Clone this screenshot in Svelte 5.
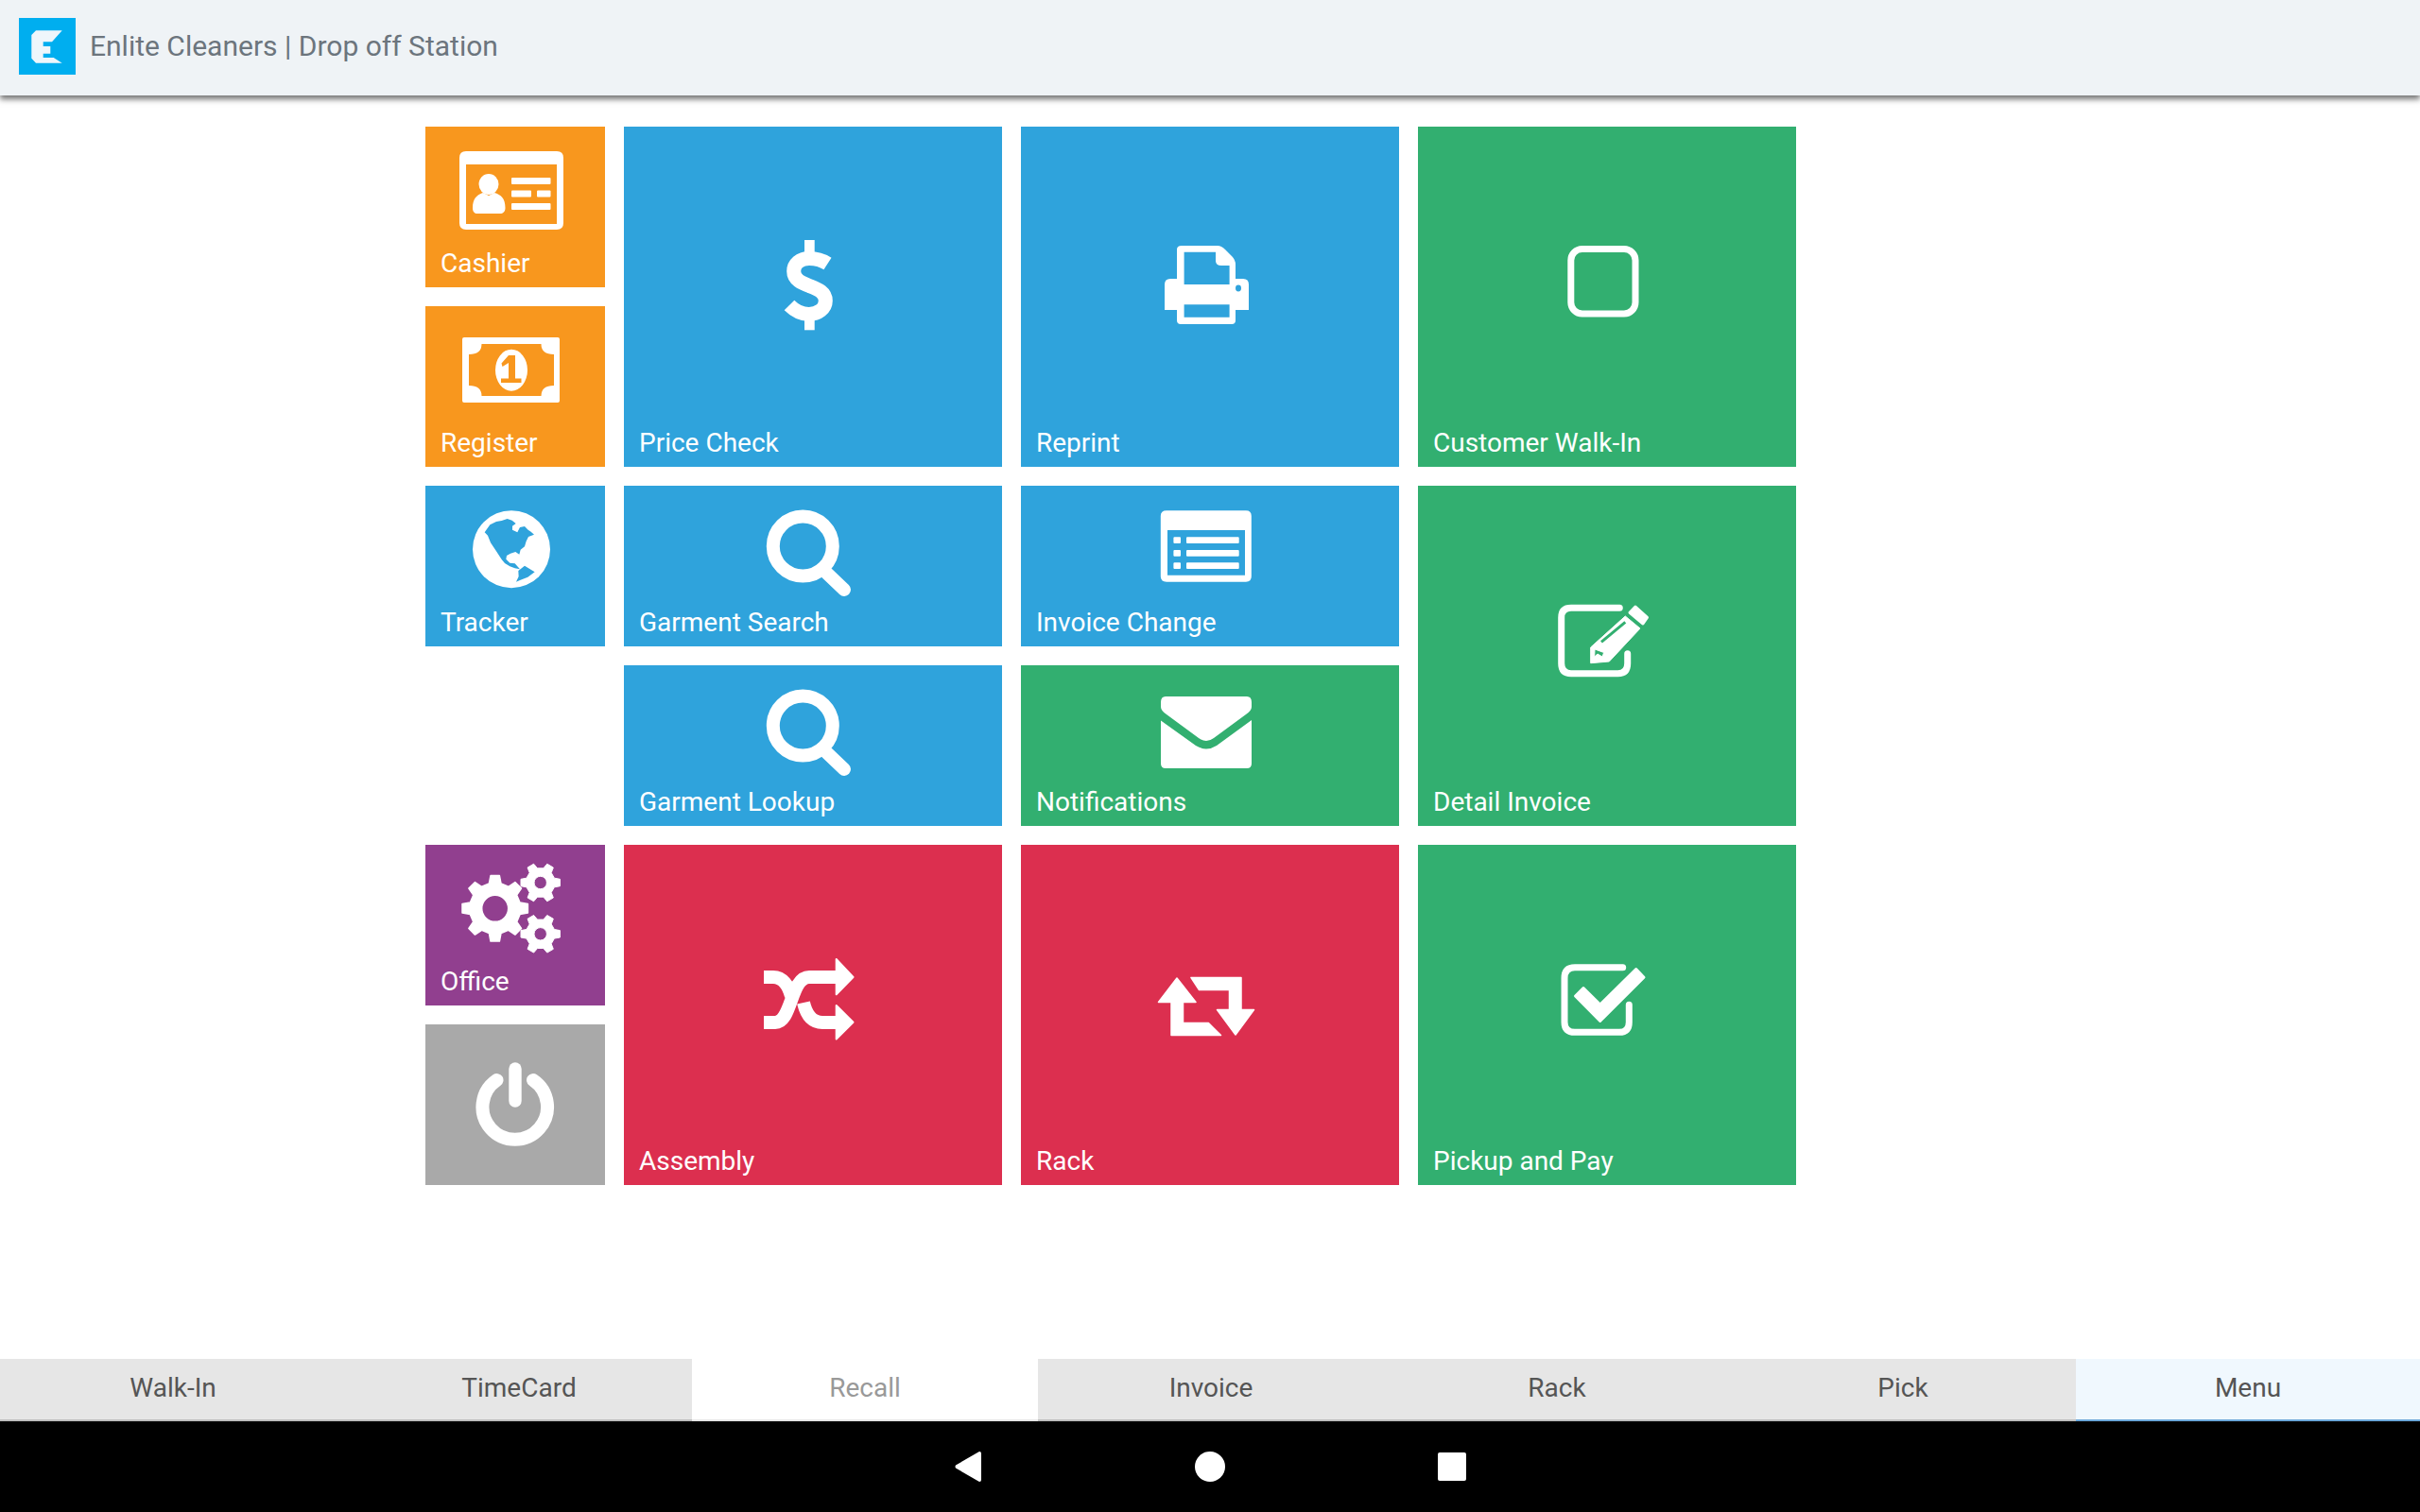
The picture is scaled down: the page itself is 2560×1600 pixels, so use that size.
<script>
  const tiles = [
    { label: 'Cashier', icon: 'cashier', color: 'orange', col: 1, row: 1 },
    { label: 'Register', icon: 'register', color: 'orange', col: 1, row: 2 },
    { label: 'Tracker', icon: 'globe', color: 'blue', col: 1, row: 3 },
    { label: 'Office', icon: 'gears', color: 'purple', col: 1, row: 5 },
    { label: '', icon: 'power', color: 'grey', col: 1, row: 6 },
    { label: 'Price Check', icon: 'dollar', color: 'blue', col: 2, row: 1, big: true },
    { label: 'Garment Search', icon: 'search', color: 'blue', col: 2, row: 3 },
    { label: 'Garment Lookup', icon: 'search', color: 'blue', col: 2, row: 4 },
    { label: 'Assembly', icon: 'shuffle', color: 'red', col: 2, row: 5, big: true },
    { label: 'Reprint', icon: 'printer', color: 'blue', col: 3, row: 1, big: true },
    { label: 'Invoice Change', icon: 'list', color: 'blue', col: 3, row: 3 },
    { label: 'Notifications', icon: 'mail', color: 'green', col: 3, row: 4 },
    { label: 'Rack', icon: 'retweet', color: 'red', col: 3, row: 5, big: true },
    { label: 'Customer Walk-In', icon: 'square', color: 'green', col: 4, row: 1, big: true },
    { label: 'Detail Invoice', icon: 'edit', color: 'green', col: 4, row: 3, big: true },
    { label: 'Pickup and Pay', icon: 'check', color: 'green', col: 4, row: 5, big: true }
  ];

  const tabs = [
    { label: 'Walk-In' },
    { label: 'TimeCard' },
    { label: 'Recall', state: 'disabled' },
    { label: 'Invoice' },
    { label: 'Rack' },
    { label: 'Pick' },
    { label: 'Menu', state: 'active' }
  ];

  // cog outline with a round hole, teeth start on the x axis
  function gear(cx, cy, outer, inner, hole, teeth) {
    const step = (Math.PI * 2) / teeth;
    const pt = (r, a) => `${(cx + r * Math.cos(a)).toFixed(1)} ${(cy + r * Math.sin(a)).toFixed(1)}`;
    let d = '';
    for (let i = 0; i < teeth; i++) {
      const a = i * step;
      d += `${i ? 'L' : 'M'}${pt(inner, a - step * 0.3)} L${pt(outer, a - step * 0.17)} L${pt(outer, a + step * 0.17)} L${pt(inner, a + step * 0.3)} `;
    }
    d += `Z M${cx - hole} ${cy} a${hole} ${hole} 0 1 0 ${hole * 2} 0 a${hole} ${hole} 0 1 0 ${-hole * 2} 0Z`;
    return d;
  }
</script>

<div class="screen">
  <header class="topbar">
    <svg class="logo" viewBox="0 0 60 60">
      <rect width="60" height="60" fill="#00aeef" />
      <polygon fill="#eef6fb" points="18,13.3 45.7,13.3 35,25.3 25.7,25.3 25.7,30 33.3,30 33.3,37.7 25.7,37.7 25.7,42 36.7,42 45.7,47.7 18,47.7 13.3,42.7 13.3,18" />
    </svg>
    <span class="title">Enlite Cleaners | Drop off Station</span>
  </header>

  <main class="content">
    <div class="grid">
      {#each tiles as tile}
        <div class="tile {tile.color}" class:big={tile.big} style="grid-column: {tile.col}; grid-row: {tile.row} / span {tile.big ? 2 : 1}">
          <svg class="icon" viewBox="0 0 160 100">
            {#if tile.icon === 'cashier'}
              <path fill-rule="evenodd" d="M28 6H124Q131 6 131 13V82Q131 89 124 89H28Q21 89 21 82V13Q21 6 28 6ZM28 20V83H124V20Z" />
              <ellipse cx="52" cy="41" rx="10.5" ry="11" />
              <path d="M35 66C35 56 40 52 46 50L52 53L58 50C65 52 69.5 56 69.5 66C69.5 70 67 72 64 72H40C37 72 35 70 35 66Z" />
              <rect x="76" y="34" width="41.5" height="7" rx="1" />
              <rect x="76" y="47.5" width="21" height="7" rx="1" />
              <rect x="103" y="47.5" width="14.5" height="7" rx="1" />
              <rect x="76" y="61" width="41.5" height="7" rx="1" />
            {:else if tile.icon === 'register'}
              <path fill-rule="evenodd" d="M26 13H125Q127 13 127 15V80Q127 82 125 82H26Q24 82 24 80V15Q24 13 26 13ZM44.5 20Q44.5 31 31 31V64Q44.5 64 44.5 75H107.5Q107.5 64 121 64V31Q107.5 31 107.5 20Z" />
              <path fill-rule="evenodd" d="M59 47.7a17 22 0 1 0 34 0a17 22 0 1 0 -34 0ZM73 32H80V56.5H86.5V61H65V56.5H73V40L66.5 44L65.5 40.5Z" />
            {:else if tile.icon === 'globe'}
              <circle cx="76" cy="47.2" r="41" />
              <g class="hole" transform="translate(25 -4) scale(.3333)">
                <path d="M68 100L85 76L105 66L122 63L140 57L155 62L167 72L156 80L156 92L172 100L180 84L195 81L206 92L215 98L225 107L207 114L200 128L195 145L182 155L178 170L166 162L150 167L138 174L136 185L148 197L164 199L180 217L164 214L148 208L132 198L122 186L104 158L87 133L78 110Z" />
                <path d="M175 222L195 206L227 226L205 242L180 252L168 257L176 240Z" />
              </g>
            {:else if tile.icon === 'gears'}
              <path d={gear(58.7, 47.3, 35, 27, 14, 8)} fill-rule="evenodd" stroke="white" stroke-width="1.5" stroke-linejoin="round" />
              <path d={gear(106.7, 20, 21, 15.5, 6.7, 6)} fill-rule="evenodd" stroke="white" stroke-width="1" stroke-linejoin="round" />
              <path d={gear(106.7, 74.3, 21, 15.5, 6.7, 6)} fill-rule="evenodd" stroke="white" stroke-width="1" stroke-linejoin="round" />
            {:else if tile.icon === 'power'}
              <g class="line" stroke-width="14" stroke-linecap="round">
                <path d="M60.5 39A34.3 34.3 0 1 0 99 39" />
                <path d="M80 27V61" stroke-width="13.4" />
              </g>
            {:else if tile.icon === 'dollar'}
              <rect x="71" y="0" width="10.7" height="16" />
              <rect x="71" y="79" width="10.7" height="16.3" />
              <path class="line" stroke-width="15" d="M95.5 25C90 21.5 83 19.5 76 19.5C66 19.5 59.7 25.5 59.7 33C59.7 42 68 45.5 76.7 48.7C85 52 93.3 55 93.3 64.3C93.3 72.5 85.5 78.5 75.7 78.5C67 78.5 60.5 74.5 55 69" />
            {:else if tile.icon === 'search'}
              <g class="line" stroke-width="14" stroke-linecap="round">
                <ellipse cx="69.3" cy="44" rx="31.5" ry="31.5" />
                <path d="M91.5 69.5L113 90" />
              </g>
            {:else if tile.icon === 'shuffle'}
              <g class="line" stroke-width="14">
                <path d="M28 68H40C58 68 56 20 76 20H106" />
                <path d="M28 20H38C48 20 54 29 57 40" />
                <path d="M70 47C73 60 79 68 90 68H106" />
              </g>
              <polygon stroke="white" stroke-width="2" stroke-linejoin="round" points="104.7,1 122.5,20 104.7,38.3" />
              <polygon stroke="white" stroke-width="2" stroke-linejoin="round" points="104.7,50 122.5,67.7 104.7,85.5" />
            {:else if tile.icon === 'printer'}
              <path fill-rule="evenodd" d="M50 6H88Q92 6 96 10L103 17Q107 21 107 26V41H115Q121 41 121 47V74H107V85Q107 89 103 89H49Q45 89 45 85V74H32V47Q32 41 38 41H45V10Q45 6 50 6ZM52.6 12.7V47H100.6V27H92Q86 27 86 22V12.7ZM52.6 68.3V81.7H100.6V68.3ZM107 51a3 3.4 0 1 0 6 0a3 3.4 0 1 0 -6 0Z" />
            {:else if tile.icon === 'list'}
              <path fill-rule="evenodd" d="M34 6.3H118Q123.8 6.3 123.8 12V76Q123.8 81.7 118 81.7H34Q27.8 81.7 27.8 76V12Q27.8 6.3 34 6.3ZM35 27V74.7H117V27ZM42.5 34.3H48Q49 34.3 49 35.3V40Q49 41 48 41H42.5Q41.4 41 41.4 40V35.3Q41.4 34.3 42.5 34.3ZM42.5 48H48Q49 48 49 49V53.7Q49 54.7 48 54.7H42.5Q41.4 54.7 41.4 53.7V49Q41.4 48 42.5 48ZM42.5 61.3H48Q49 61.3 49 62.3V67Q49 68 48 68H42.5Q41.4 68 41.4 67V62.3Q41.4 61.3 42.5 61.3ZM56 34.3H109.7Q110.7 34.3 110.7 35.3V40Q110.7 41 109.7 41H56Q55 41 55 40V35.3Q55 34.3 56 34.3ZM56 48H109.7Q110.7 48 110.7 49V53.7Q110.7 54.7 109.7 54.7H56Q55 54.7 55 53.7V49Q55 48 56 48ZM56 61.3H109.7Q110.7 61.3 110.7 62.3V67Q110.7 68 109.7 68H56Q55 68 55 67V62.3Q55 61.3 56 61.3Z" />
            {:else if tile.icon === 'mail'}
              <path d="M33 13H119Q124 13 124 19V24Q124 28 118 32L84 57Q76 63 68 57L34 32Q28 28 28 24V19Q28 13 33 13Z" />
              <path d="M28 38.5L65 65Q76 72 87 65L124 38V84Q124 89 119 89H33Q28 89 28 84Z" />
            {:else if tile.icon === 'retweet'}
              <polygon stroke="white" stroke-width="1.5" stroke-linejoin="round" points="45,21 65,46.5 51.5,46.5 51.5,68.5 78.4,68.5 91.5,81.5 39,81.5 39,46.5 25.5,46.5" />
              <polygon stroke="white" stroke-width="1.5" stroke-linejoin="round" points="60,20.5 113,20.5 113,54.5 126.5,54.5 107,81 87.5,54.5 100.5,54.5 100.5,33.5 68.5,33.5" />
            {:else if tile.icon === 'square'}
              <rect class="line" x="41.8" y="9.5" width="68.2" height="68.5" rx="12" stroke-width="7" />
            {:else if tile.icon === 'edit'}
              <path class="line" stroke-width="7" stroke-linecap="round" d="M93.3 9.3H42Q31.7 9.3 31.7 19.5V68Q31.7 78.7 42 78.7H91.5Q101.7 78.7 101.7 68V57.7" />
              <polygon stroke="white" stroke-width="3" stroke-linejoin="round" points="110,8 122.5,19.3 118,26 104,14.3" />
              <path fill-rule="evenodd" stroke="white" stroke-width="1" d="M99.3 18L115 31L82.3 66L62.7 67.7V51ZM67 53L76.7 56.5L75 61L70 58L66.7 61Z" />
              <path class="cut" stroke-width="3" d="M74 45.3L99.3 24.3" />
            {:else if tile.icon === 'check'}
              <path class="line" stroke-width="7" stroke-linecap="round" d="M96.7 9.7H46Q35 9.7 35 21V67.7Q35 78.3 46 78.3H93Q103.3 78.3 103.3 67.7V49.3" />
              <polygon stroke="white" stroke-width="3" stroke-linejoin="round" points="55,31.5 46.5,40 72.7,66.5 119,20.3 110.7,11.5 72.7,49" />
            {/if}
          </svg>
          {#if tile.label}
            <span class="label">{tile.label}</span>
          {/if}
        </div>
      {/each}
    </div>
  </main>

  <nav class="tabs">
    {#each tabs as tab}
      <div class="tab {tab.state ?? ''}">{tab.label}</div>
    {/each}
  </nav>

  <footer class="softkeys">
    <svg width="28" height="32" viewBox="0 0 28 32"><path d="M26 0Q28 0 28 2V30Q28 32 26 32L1 17.5Q0 16 1 14.5Z" fill="white" /></svg>
    <span class="dot"></span>
    <span class="stop"></span>
  </footer>
</div>

<style>
  :global(body) {
    overflow: hidden;
    background: #fff;
  }

  .screen {
    display: flex;
    flex-direction: column;
    height: 1600px;
    font-family: Roboto, "Liberation Sans", sans-serif;
  }

  .topbar {
    position: relative;
    z-index: 1;
    display: flex;
    align-items: center;
    gap: 15px;
    height: 101px;
    padding: 0 20px 4px;
    box-sizing: border-box;
    background: #eff3f6;
    box-shadow: 0 4px 6px rgba(0, 0, 0, 0.55);
  }

  .logo {
    width: 60px;
    height: 60px;
  }

  .title {
    font-size: 30px;
    color: #6c757d;
  }

  .content {
    flex: 1;
    padding: 33px 0 0 450px;
  }

  .grid {
    display: grid;
    grid-template-columns: 190px 400px 400px 400px;
    grid-template-rows: repeat(6, 170px);
    gap: 20px;
  }

  .tile {
    display: flex;
    flex-direction: column;
    background: var(--c);
    color: #fff;
  }

  .orange { --c: #f8971e; }
  .blue { --c: #2fa3dc; }
  .green { --c: #32af70; }
  .red { --c: #dc2f4f; }
  .purple { --c: #913f8f; }
  .grey { --c: #a9a9a9; }

  .icon {
    display: block;
    flex: none;
    align-self: center;
    width: 160px;
    height: 100px;
    margin-top: 20px;
    overflow: visible;
    fill: #fff;
  }

  .big .icon {
    margin-top: 120px;
  }

  .icon .line {
    fill: none;
    stroke: #fff;
  }

  .icon .hole {
    fill: var(--c);
  }

  .icon .cut {
    fill: none;
    stroke: var(--c);
  }

  .label {
    margin-top: auto;
    padding: 0 16px 8px;
    font-size: 28px;
    line-height: 34px;
  }

  .tabs {
    display: grid;
    grid-template-columns: repeat(6, 366px) 1fr;
    height: 66px;
  }

  .tab {
    padding-top: 15px;
    box-sizing: border-box;
    background: #e6e6e6;
    border-bottom: 2px solid #bdbdbd;
    color: #555;
    font-size: 28px;
    line-height: 32px;
    text-align: center;
  }

  .tab.disabled {
    background: #fff;
    border-bottom-color: #e6e6e6;
    color: #999;
  }

  .tab.active {
    background: #f0f8fe;
    border-bottom-color: #6aa6d8;
  }

  .softkeys {
    display: grid;
    grid-template-columns: repeat(3, 256px);
    justify-content: center;
    justify-items: center;
    align-items: center;
    height: 96px;
    background: #000;
  }

  .dot {
    width: 32px;
    height: 32px;
    border-radius: 50%;
    background: #fff;
  }

  .stop {
    width: 30px;
    height: 30px;
    border-radius: 2px;
    background: #fff;
  }
</style>
